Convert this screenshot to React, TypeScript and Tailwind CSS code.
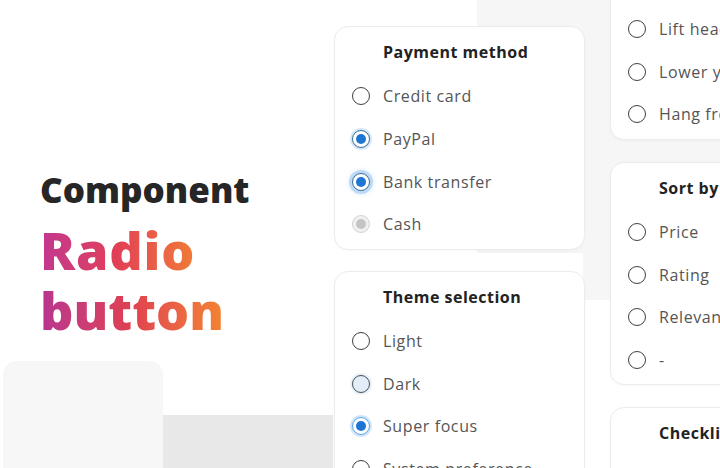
import React from "react";

type RadioState = "off" | "on" | "focus" | "hover" | "ring" | "disabled";

type Option = { label: string; state?: RadioState };

type Group = { title: string; options: Option[] };

const LEFT_GROUPS: Group[] = [
  {
    title: "Payment method",
    options: [
      { label: "Credit card" },
      { label: "PayPal", state: "on" },
      { label: "Bank transfer", state: "focus" },
      { label: "Cash", state: "disabled" },
    ],
  },
  {
    title: "Theme selection",
    options: [
      { label: "Light" },
      { label: "Dark", state: "hover" },
      { label: "Super focus", state: "ring" },
      { label: "System preference" },
    ],
  },
];

const RIGHT_GROUPS: Group[] = [
  {
    title: "Exercise",
    options: [
      { label: "Stretch arms" },
      { label: "Lift head up" },
      { label: "Lower your chin" },
      { label: "Hang from bar" },
    ],
  },
  {
    title: "Sort by",
    options: [
      { label: "Price" },
      { label: "Rating" },
      { label: "Relevance" },
      { label: "-" },
    ],
  },
  {
    title: "Checklist",
    options: [{ label: "Today" }, { label: "Tomorrow" }],
  },
];

const RING: Record<RadioState, string> = {
  off: "border-[#3f3f3f] bg-white",
  on: "border-[#3d6c98] bg-white shadow-[0_0_0_2px_#d5e7f9]",
  focus: "border-[#3d6c98] bg-white shadow-[0_0_0_3px_#bcd9f6,0_0_6px_2px_#cfe3f8]",
  hover: "border-[#4a4f55] bg-[#e2edf9] shadow-[0_0_0_2px_#e9f2fb]",
  ring: "border-[#5aa5e9] bg-white shadow-[0_0_0_2px_#d3e6f9]",
  disabled: "border-[#d2d2d2] bg-[#f1f1f1]",
};

const DOT: Record<RadioState, string> = {
  off: "",
  hover: "",
  on: "bg-[#1f76d2]",
  focus: "bg-[#1f76d2]",
  ring: "bg-[#1f76d2]",
  disabled: "bg-[#c4c4c4]",
};

function Radio({ state = "off" }: { state?: RadioState }) {
  return (
    <span
      className={`flex h-[18px] w-[18px] shrink-0 items-center justify-center rounded-full border-[1.5px] ${RING[state]}`}
    >
      {DOT[state] && <span className={`h-[10px] w-[10px] rounded-full ${DOT[state]}`} />}
    </span>
  );
}

function RadioCard({ group }: { group: Group }) {
  return (
    <div className="w-[251px] shrink-0 rounded-[14px] border border-[#ececec] bg-white px-[17px] pt-[15px] pb-[3px] shadow-[0_1px_3px_rgba(0,0,0,0.03)]">
      <h3 className="ml-[31px] whitespace-nowrap text-[16px] font-bold leading-5 tracking-[0.5px] text-[#222]">
        {group.title}
      </h3>
      <ul className="mt-[13px]">
        {group.options.map((o) => (
          <li key={o.label} className="flex h-[42.67px] items-center gap-[13px]">
            <Radio state={o.state} />
            <span className="whitespace-nowrap text-[16px] tracking-[0.6px] text-[#555]">{o.label}</span>
          </li>
        ))}
      </ul>
    </div>
  );
}

export default function App() {
  return (
    <div
      className="relative flex h-[468px] w-[720px] overflow-hidden bg-white"
      style={{ fontFamily: '"Open Sans", "Liberation Sans", sans-serif' }}
    >
      {/* backdrop blocks */}
      <div className="absolute left-[477px] top-0 h-[253px] w-[243px] bg-[#f6f6f6]" />
      <div className="absolute left-[583px] top-[253px] h-[47px] w-[137px] bg-[#f6f6f6]" />
      <div className="absolute left-[3px] top-[361px] h-[107px] w-[160px] rounded-t-[14px] bg-[#f7f7f7]" />
      <div className="absolute left-[163px] top-[415px] h-[53px] w-[170px] bg-[#e8e8e8]" />

      <div className="relative w-[334px] shrink-0 pl-10 pt-[168px] font-extrabold">
        <div className="text-[35px] leading-[44px] text-[#262626]">Component</div>
        <div className="mt-2 text-[52px] leading-[60px] tracking-[0.8px]">
          <span className="bg-gradient-to-r from-[#c2368f] via-[#e23f55] to-[#f07a34] bg-clip-text text-transparent">
            Radio
          </span>
        </div>
        <div className="text-[52px] leading-[60px]">
          <span className="bg-gradient-to-r from-[#b8358f] via-[#e0404f] to-[#f3832f] bg-clip-text text-transparent">
            button
          </span>
        </div>
      </div>

      <div className="relative mt-[26px] flex flex-col gap-[21px]">
        {LEFT_GROUPS.map((g) => (
          <RadioCard key={g.title} group={g} />
        ))}
      </div>

      <div className="relative -mt-[84px] ml-[25px] flex flex-col gap-[22px]">
        {RIGHT_GROUPS.map((g) => (
          <RadioCard key={g.title} group={g} />
        ))}
      </div>
    </div>
  );
}
